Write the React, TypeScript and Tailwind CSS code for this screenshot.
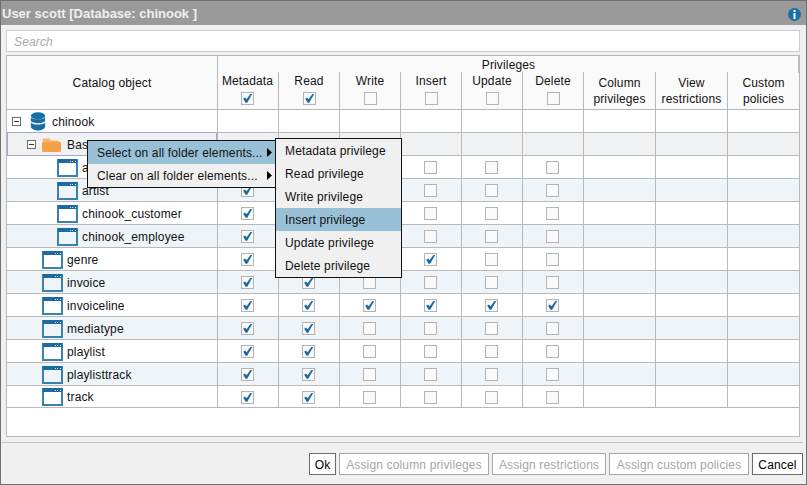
import React from "react";

const colClasses = [
  "w-[61px]", "w-[61px]", "w-[61px]", "w-[61px]", "w-[61px]", "w-[61px]", "w-[72px]", "w-[72px]", "w-[72px]",
];

function Check({ on }: { on?: boolean }) {
  return (
    <span className="block relative w-[13px] h-[13px] border border-[#b4b4b4] bg-[#fafafa] shrink-0">
      {on && (
        <svg width="11" height="11" viewBox="0 0 11 11" className="absolute left-0 top-0">
          <path d="M1.2 5.8 L3 4.6 L4.6 6.2 L8.4 1 L10.2 1 L5.2 9.8 L3.6 9.8 Z" fill="#1a6aa3" />
        </svg>
      )}
    </span>
  );
}

function Minus() {
  return (
    <span className="flex items-center justify-center w-[9px] h-[9px] border border-[#6e6e6e] bg-white shrink-0">
      <span className="block w-[5px] h-px bg-[#333]" />
    </span>
  );
}

function TableIcon() {
  return (
    <svg width="21" height="18" viewBox="0 0 21 18" className="shrink-0">
      <path d="M0 0 H21 V18 H0 Z M2 4 V16 H19 V4 Z" fillRule="evenodd" fill="#3a81ad" />
      <rect x="1" y="0" width="19" height="4" fill="#1d6b9e" />
      <rect x="13" y="2" width="1" height="1" fill="#cfe0ec" />
      <rect x="15" y="2" width="1" height="1" fill="#cfe0ec" />
      <rect x="18" y="2" width="1" height="1" fill="#ffffff" />
    </svg>
  );
}

function FolderIcon() {
  return (
    <svg width="19" height="14" viewBox="0 0 19 14" className="shrink-0">
      <path d="M0.5 2 Q0.5 0.5 2 0.5 H7 L9 2.5 H15.5 Q17 2.5 17 4 V5 H2 V5 Z" fill="#f8b36b" />
      <path d="M0 4 H18 Q19 4 19 5 V12.5 Q19 14 17.5 14 H1.5 Q0 14 0 12.5 Z" fill="#f7a04a" />
    </svg>
  );
}

function DbIcon() {
  return (
    <svg width="16" height="19" viewBox="0 0 16 20" className="shrink-0 ml-[3px]">
      <ellipse cx="8" cy="4" rx="7.5" ry="3.8" fill="#176ea6" />
      <path d="M0.5 5.5 C2 8.5 14 8.5 15.5 5.5 V9.5 C14 12.5 2 12.5 0.5 9.5 Z" fill="#176ea6" />
      <path d="M0.5 11 C2 14 14 14 15.5 11 V15.5 C14 20.8 2 20.8 0.5 15.5 Z" fill="#176ea6" />
    </svg>
  );
}

type Row = {
  name: string;
  pad: string;
  icon: "db" | "folder" | "table";
  tree?: boolean;
  checks: number[];
  bg: string;
  gap: string;
};

const rows: Row[] = [
  { name: "chinook", pad: "pl-[5px]", icon: "db", tree: true, checks: [], bg: "bg-white", gap: "gap-[6px]" },
  { name: "Base", pad: "pl-[19px]", icon: "folder", tree: true, checks: [], bg: "bg-[#f0f1f3]", gap: "gap-[6px]" },
  { name: "album", pad: "pl-[50px]", icon: "table", checks: [0, 1], bg: "bg-white", gap: "gap-[4px]" },
  { name: "artist", pad: "pl-[50px]", icon: "table", checks: [0, 1], bg: "bg-[#eff4f9]", gap: "gap-[4px]" },
  { name: "chinook_customer", pad: "pl-[50px]", icon: "table", checks: [0, 1], bg: "bg-white", gap: "gap-[4px]" },
  { name: "chinook_employee", pad: "pl-[50px]", icon: "table", checks: [0, 1], bg: "bg-[#eff4f9]", gap: "gap-[4px]" },
  { name: "genre", pad: "pl-[35px]", icon: "table", checks: [0, 1, 3], bg: "bg-white", gap: "gap-[4px]" },
  { name: "invoice", pad: "pl-[35px]", icon: "table", checks: [0, 1], bg: "bg-[#eff4f9]", gap: "gap-[4px]" },
  { name: "invoiceline", pad: "pl-[35px]", icon: "table", checks: [0, 1, 2, 3, 4, 5], bg: "bg-white", gap: "gap-[4px]" },
  { name: "mediatype", pad: "pl-[35px]", icon: "table", checks: [0, 1], bg: "bg-[#eff4f9]", gap: "gap-[4px]" },
  { name: "playlist", pad: "pl-[35px]", icon: "table", checks: [0, 1], bg: "bg-white", gap: "gap-[4px]" },
  { name: "playlisttrack", pad: "pl-[35px]", icon: "table", checks: [0, 1], bg: "bg-[#eff4f9]", gap: "gap-[4px]" },
  { name: "track", pad: "pl-[35px]", icon: "table", checks: [0, 1], bg: "bg-white", gap: "gap-[4px]" },
];

const privs = ["Metadata", "Read", "Write", "Insert", "Update", "Delete"];
const extra = [
  ["Column", "privileges"],
  ["View", "restrictions"],
  ["Custom", "policies"],
];
const subItems = [
  "Metadata privilege",
  "Read privilege",
  "Write privilege",
  "Insert privilege",
  "Update privilege",
  "Delete privilege",
];

function TreeRow({ r, selected }: { r: Row; selected: boolean }) {
  return (
    <div className={`flex ${r.name === "track" ? "h-[22px]" : "h-[23px]"} border-b border-[#b9b9b9] ${r.bg}`}>
      <div
        className={`w-[210px] shrink-0 flex items-center pt-px ${r.gap} ${r.pad} ${
          selected ? "border border-[#a9a3cf] h-[24px] -mt-px" : ""
        }`}
      >
        {r.tree && <Minus />}
        {r.icon === "db" && <DbIcon />}
        {r.icon === "folder" && <FolderIcon />}
        {r.icon === "table" && <TableIcon />}
        <span className="whitespace-nowrap">{r.name}</span>
      </div>
      {colClasses.map((c, i) => (
        <div key={i} className={`${c} shrink-0 border-l border-[#b9b9b9] flex items-center justify-center pr-px pt-px`}>
          {r.icon === "table" && i < 6 && <Check on={r.checks.includes(i)} />}
        </div>
      ))}
    </div>
  );
}

function Btn({ label, width, off }: { label: string; width: string; off?: boolean }) {
  return (
    <button
      className={`${width} shrink-0 h-[22px] bg-white border flex items-center justify-center whitespace-nowrap pt-px ${
        off ? "border-[#a8a8a8] text-[#a6a6a6]" : "border-[#6a6a6a] text-black"
      }`}
    >
      {label}
    </button>
  );
}

function Arrow() {
  return (
    <svg width="5" height="9" viewBox="0 0 5 9" className="absolute right-[3px] top-[7px]">
      <path d="M0 0 L5 4.5 L0 9 Z" fill="#000" />
    </svg>
  );
}

export default function App() {
  return (
    <div className="relative w-[807px] h-[485px] overflow-hidden flex flex-col bg-[#f0f0f0] border border-[#707070] text-[12px] leading-[14px] tracking-[0.15px] text-[#111] font-['Liberation_Sans',Arial,sans-serif]">
      <div className="h-[24px] shrink-0 bg-[#9a9a9a] flex items-center justify-between pl-[1px] pr-[5px] pt-[2px]">
        <span className="text-[#efefef] font-bold text-[13px] tracking-normal">User scott [Database: chinook ]</span>
        <svg width="13" height="13" viewBox="0 0 13 13">
          <circle cx="6.5" cy="6.5" r="6.5" fill="#1a70aa" />
          <rect x="5.5" y="2" width="2" height="2" fill="#fff" />
          <rect x="5.5" y="5" width="2" height="6" fill="#fff" />
        </svg>
      </div>

      <div className="flex-1 flex flex-col pl-[5px] pr-[6px] pt-[5px] gap-[3px]">
        <div className="h-[22px] w-[794px] shrink-0 bg-white border border-[#cccccc] flex items-center pl-[7px] pt-px italic text-[#a8a8a8]">
          Search
        </div>

        <div className="h-[382px] w-[794px] shrink-0 bg-white border border-[#b9b9b9] relative">
          {/* Header */}
          <div className="flex h-[54px] border-b border-[#b9b9b9] bg-[#fafafa]">
            <div className="w-[210px] shrink-0 flex items-center justify-center pt-[1px]">Catalog object</div>
            <div className="flex-1 flex flex-col border-l border-[#b9b9b9]">
              <div className="h-[16px] shrink-0 flex items-center justify-center pt-[2px]">Privileges</div>
              <div className="flex-1 flex -ml-px">
                {privs.map((p, i) => (
                  <div
                    key={p}
                    className={`${colClasses[i]} shrink-0 flex flex-col items-center gap-[4px] ${i === 0 ? "" : "border-l border-[#b9b9b9]"} pt-[2px]`}
                  >
                    <span>{p}</span>
                    <Check on={i < 2} />
                  </div>
                ))}
                {extra.map((e, i) => (
                  <div
                    key={e[0]}
                    className={`${colClasses[6 + i]} shrink-0 flex flex-col items-center justify-center border-l border-[#b9b9b9] leading-[16px] pt-[1px]`}
                  >
                    <span>{e[0]}</span>
                    <span>{e[1]}</span>
                  </div>
                ))}
              </div>
            </div>
          </div>

          {rows.map((r) => (
            <TreeRow key={r.name} r={r} selected={r.name === "Base"} />
          ))}

          {/* Scrollbar sliver */}
          <div className="absolute right-0 top-0 w-[1px] h-[17px] bg-[#bdbdbd]" />
        </div>

        <div className="mt-[2px] -ml-[5px] w-[802px] border-t border-[#c4c4c4] pt-[10px] flex justify-end gap-[3px]">
          <Btn label="Ok" width="w-[27px]" />
          <Btn label="Assign column privileges" width="w-[150px]" off />
          <Btn label="Assign restrictions" width="w-[114px]" off />
          <Btn label="Assign custom policies" width="w-[140px]" off />
          <Btn label="Cancel" width="w-[51px]" />
        </div>
      </div>

      {/* Context menu */}
      <div className="absolute left-[86px] top-[139px] w-[189px] border border-[#111] bg-[#f0f0f0] flex flex-col">
        <div className="relative h-[23px] bg-[#98c0d6] flex items-center pl-[9px]">
          Select on all folder elements...
          <Arrow />
        </div>
        <div className="relative h-[23px] flex items-center pl-[9px]">
          Clear on all folder elements...
          <Arrow />
        </div>
      </div>

      {/* Submenu */}
      <div className="absolute left-[274px] top-[137px] w-[127px] border border-[#111] bg-[#f0f0f0] flex flex-col">
        {subItems.map((s) => (
          <div
            key={s}
            className={`h-[23px] flex items-center pl-[9px] ${s === "Insert privilege" ? "bg-[#98c0d6]" : ""}`}
          >
            {s}
          </div>
        ))}
      </div>
    </div>
  );
}
